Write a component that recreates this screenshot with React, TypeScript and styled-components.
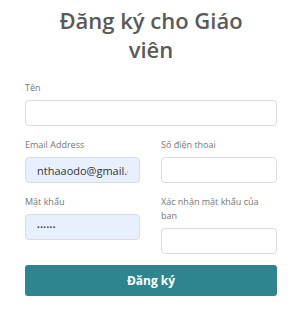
import React from "react";
import styled, { createGlobalStyle } from "styled-components";

const GlobalStyle = createGlobalStyle`
  body {
    margin: 0;
    background: #fff;
    font-family: "Open Sans", "Liberation Sans", sans-serif;
  }
`;

const App = () => {
  return (
    <>
      <GlobalStyle />
      <Page>
        <Title>
          Đăng ký cho Giáo
          <br />
          viên
        </Title>
        <Form onSubmit={(e) => e.preventDefault()}>
          <Field>
            <Label>Tên</Label>
            <Input type="text" />
          </Field>
          <Row>
            <Field>
              <Label>Email Address</Label>
              <Input type="email" defaultValue="nthaaodo@gmail.com" filled />
            </Field>
            <Field>
              <Label>Số điện thoai</Label>
              <Input type="tel" />
            </Field>
          </Row>
          <Row>
            <Field>
              <Label>Mật khẩu</Label>
              <Input type="password" defaultValue="123456" filled />
            </Field>
            <Field>
              <Label>Xác nhận mật khẩu của ban</Label>
              <Input type="password" />
            </Field>
          </Row>
          <Submit type="submit">Đăng ký</Submit>
        </Form>
      </Page>
    </>
  );
};

export default App;

const Page = styled.div`
  width: 252px;
  padding: 6px 16px 20px 25px;
`;

const Title = styled.h1`
  margin: 0 0 17px;
  text-align: center;
  font-size: 22px;
  line-height: 29px;
  font-weight: 600;
  color: #5a5a5a;
`;

const Form = styled.form`
  display: flex;
  flex-direction: column;
  gap: 12px;
`;

const Row = styled.div`
  display: grid;
  grid-template-columns: 115px 116px;
  column-gap: 21px;
  align-items: start;
`;

const Field = styled.div`
  display: flex;
  flex-direction: column;
`;

const Label = styled.label`
  max-width: 100px;
  font-size: 9px;
  line-height: 14px;
  color: #777;
  margin-bottom: 5px;
`;

const Input = styled.input<{ filled?: boolean }>`
  box-sizing: border-box;
  width: 100%;
  height: 26px;
  padding: 0 11px;
  border: 1px solid #dcdcdc;
  border-radius: 4px;
  background: ${({ filled }) => (filled ? "#e8f0fe" : "#fff")};
  font-family: "Open Sans", "Liberation Sans", sans-serif;
  font-size: 11px;
  color: #333;
  outline: none;

  &[type="password"] {
    font-size: 7px;
    letter-spacing: 0.5px;
  }
`;

const Submit = styled.button`
  margin-top: -1px;
  height: 31px;
  border: none;
  border-radius: 3px;
  background: #2e8590;
  color: #fff;
  font-family: "Open Sans", "Liberation Sans", sans-serif;
  font-size: 12px;
  font-weight: 700;
  cursor: pointer;
`;
